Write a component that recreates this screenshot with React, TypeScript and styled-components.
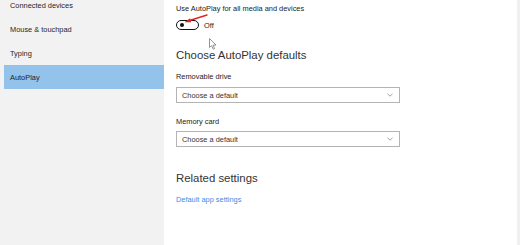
import React from 'react';
import styled, { createGlobalStyle } from 'styled-components';

const GlobalStyle = createGlobalStyle`
  html, body {
    margin: 0;
    padding: 0;
    background: #ffffff;
  }
  body {
    font-family: 'Liberation Sans', Arial, sans-serif;
  }
`;

const Screen = styled.div`
  display: flex;
  width: 520px;
  height: 245px;
  overflow: hidden;
`;

const Sidebar = styled.nav`
  width: 160px;
  padding-left: 4px;
  background: #f2f2f2;
  display: flex;
  flex-direction: column;
`;

const NavList = styled.ul`
  list-style: none;
  margin: -7px 0 0;
  padding: 0;
`;

const NavItem = styled.li<{ $active?: boolean }>`
  height: 24px;
  display: flex;
  align-items: center;
  padding-left: 6px;
  font-size: 7.4px;
  color: #1f1f1f;
  background: ${({ $active }) => ($active ? '#93c2ea' : 'transparent')};
`;

const Main = styled.main`
  position: relative;
  flex: 1;
  background: #ffffff;
  padding-left: 12px;
  display: flex;
  flex-direction: column;
  align-items: flex-start;
`;

const EdgeStrip = styled.div`
  width: 3px;
  background: #f0f0f0;
`;

const Label = styled.div<{ $top: number }>`
  margin-top: ${({ $top }) => $top}px;
  font-size: 7.4px;
  line-height: 10px;
  color: #222;
  white-space: nowrap;
`;

const Heading = styled.h2<{ $top: number }>`
  margin: ${({ $top }) => $top}px 0 0;
  font-size: 11.4px;
  line-height: 14px;
  font-weight: normal;
  color: #333;
  white-space: nowrap;
`;

const ToggleRow = styled.div`
  margin-top: 6px;
  display: flex;
  align-items: center;
  gap: 5px;
`;

const Toggle = styled.div`
  box-sizing: border-box;
  width: 23px;
  height: 10px;
  border: 1.5px solid #111;
  border-radius: 5px;
  display: flex;
  align-items: center;
  padding-left: 2.5px;
`;

const Knob = styled.span`
  width: 4px;
  height: 4px;
  border-radius: 50%;
  background: #111;
`;

const ToggleText = styled.span`
  font-size: 7.4px;
  color: #222;
`;

const Select = styled.div<{ $top: number }>`
  box-sizing: border-box;
  margin-top: ${({ $top }) => $top}px;
  width: 224px;
  height: 16px;
  border: 1px solid #b4b4b4;
  display: flex;
  align-items: center;
  justify-content: space-between;
  padding: 0 6px 0 5px;
  font-size: 7.4px;
  color: #333;
`;

const Link = styled.a`
  margin-top: 10px;
  font-size: 7.4px;
  line-height: 10px;
  color: #3a8ee3;
  text-decoration: none;
  white-space: nowrap;
`;

const RedArrow = styled.svg`
  position: absolute;
  left: 19px;
  top: 12px;
`;

const Pointer = styled.svg`
  position: absolute;
  left: 45px;
  top: 38px;
`;

const Chevron = () => (
  <svg width="6" height="4" viewBox="0 0 6 4">
    <path d="M0.5 0.8 L3 3.2 L5.5 0.8" fill="none" stroke="#8a8a8a" strokeWidth="0.8" />
  </svg>
);

const navItems = ['Connected devices', 'Mouse & touchpad', 'Typing', 'AutoPlay'];

export default function App() {
  return (
    <>
      <GlobalStyle />
      <Screen>
        <Sidebar>
          <NavList>
            {navItems.map((item) => (
              <NavItem key={item} $active={item === 'AutoPlay'}>
                {item}
              </NavItem>
            ))}
          </NavList>
        </Sidebar>
        <Main>
          <Label $top={4}>Use AutoPlay for all media and devices</Label>
          <ToggleRow>
            <Toggle>
              <Knob />
            </Toggle>
            <ToggleText>Off</ToggleText>
          </ToggleRow>
          <Heading $top={18}>Choose AutoPlay defaults</Heading>
          <Label $top={10}>Removable drive</Label>
          <Select $top={5}>
            <span>Choose a default</span>
            <Chevron />
          </Select>
          <Label $top={14}>Memory card</Label>
          <Select $top={4}>
            <span>Choose a default</span>
            <Chevron />
          </Select>
          <Heading $top={24}>Related settings</Heading>
          <Link href="#">Default app settings</Link>

          <RedArrow width="26" height="14" viewBox="0 0 26 14">
            <line x1="5" y1="9" x2="24" y2="3" stroke="#e3241f" strokeWidth="1.4" strokeLinecap="round" />
            <path d="M1.5 10.2 L7.2 6.2 L8.2 10.3 Z" fill="#e3241f" />
          </RedArrow>

          <Pointer width="8" height="12" viewBox="0 0 8 12">
            <path
              d="M0.5 0.5 L0.5 9.5 L2.6 7.6 L4.2 11.2 L5.6 10.6 L4.1 7.1 L7 7.1 Z"
              fill="#ffffff"
              stroke="#7a7a7a"
              strokeWidth="0.8"
              strokeLinejoin="round"
            />
          </Pointer>
        </Main>
        <EdgeStrip />
      </Screen>
    </>
  );
}
